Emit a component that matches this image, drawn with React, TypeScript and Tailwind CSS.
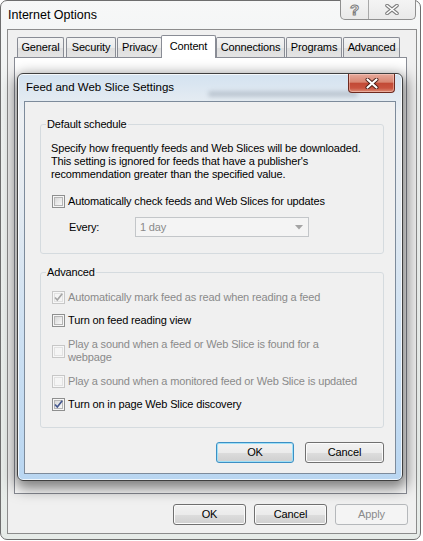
import React from "react";

function Check({ checked = false, disabled = false }: { checked?: boolean; disabled?: boolean }) {
  return (
    <span
      className={`flex h-[13px] w-[13px] shrink-0 items-center justify-center border ${
        disabled ? "border-[#c7c7c7] bg-[#f7f7f7]" : "border-[#8e8f8f] bg-[#f6f6f6]"
      }`}
    >
      <span
        className={`relative h-[9px] w-[9px] border ${
          disabled
            ? "border-[#e2e2e2] bg-[#f5f5f5]"
            : "border-[#b5b5b5] bg-gradient-to-br from-[#d8d8d8] to-[#f9f9f9]"
        }`}
      >
        {checked && (
          <svg className="absolute left-[-2px] top-[-2px]" width="11" height="11" viewBox="0 0 11 11">
            <path
              d="M2 5.5 L4.3 8 L9.2 1.8"
              fill="none"
              stroke={disabled ? "#a6a6a6" : "#46598f"}
              strokeWidth="1.7"
            />
          </svg>
        )}
      </span>
    </span>
  );
}

function Row({
  checked,
  disabled,
  className = "",
  children,
}: {
  checked?: boolean;
  disabled?: boolean;
  className?: string;
  children: React.ReactNode;
}) {
  return (
    <div
      className={`flex items-center gap-[3px] pl-[11px] leading-[13px] ${
        disabled ? "text-[#8a8a8a]" : "text-black"
      } ${className}`}
    >
      <Check checked={checked} disabled={disabled} />
      <span>{children}</span>
    </div>
  );
}

function Btn({
  label,
  w,
  primary,
  disabled,
}: {
  label: string;
  w: string;
  primary?: boolean;
  disabled?: boolean;
}) {
  const look = disabled
    ? "border-[#b5b8bb] bg-[#f4f4f4] text-[#8a8a8a]"
    : primary
    ? "border-[#3c8fc4] bg-[linear-gradient(180deg,#f2f2f2_0%,#ebebeb_50%,#dcdcdc_51%,#cfcfcf_100%)] shadow-[inset_0_0_0_1px_#9fe0f7] text-black"
    : "border-[#707070] bg-[linear-gradient(180deg,#f2f2f2_0%,#ebebeb_50%,#dddddd_51%,#cfcfcf_100%)] shadow-[inset_0_0_0_1px_#fbfbfb] text-black";
  return (
    <div className={`flex h-[21px] ${w} items-center justify-center rounded-[3px] border ${look}`}>
      {label}
    </div>
  );
}

const tabs = [
  { label: "General", cls: "w-[47px]" },
  { label: "Security", cls: "ml-[2px] w-[50px]" },
  { label: "Privacy", cls: "ml-[1px] w-[45px]" },
  { label: "Content", cls: "ml-[-1px] w-[55px]", active: true },
  { label: "Connections", cls: "w-[69px]" },
  { label: "Programs", cls: "ml-[1px] w-[56px]" },
  { label: "Advanced", cls: "ml-[1px] w-[57px]" },
];

export default function App() {
  return (
    <div className="h-[541px] w-[423px] bg-white font-['Liberation_Sans',Arial,sans-serif] text-[11px] tracking-[-0.15px] text-black">
      <div className="relative flex h-[540px] w-[421px] flex-col rounded-[7px] border border-[#6e6e6e] bg-[linear-gradient(180deg,#f7f8f8_0%,#eef1f0_20%,#e6ebe8_100%)] pb-[5px] pl-[6px] pr-[3px]">
        <div className="flex h-[28px] items-center pl-[1px] text-[12.5px] tracking-normal">Internet Options</div>

        {/* caption buttons */}
        <div className="absolute right-[4px] top-[-1px] flex h-[20px] w-[76px] overflow-hidden rounded-b-[5px] border border-t-0 border-[#8f8f8f] bg-[linear-gradient(180deg,#f4f4f4,#e9e9e9)]">
          <div className="flex w-[28px] items-center justify-center border-r border-[#a8a8a8]">
            <span className="text-[15px] font-bold leading-none text-white [-webkit-text-stroke:1px_#7c7c7c]">?</span>
          </div>
          <div className="flex flex-1 items-center justify-center">
            <svg width="14" height="11" viewBox="0 0 14 11">
              <path d="M2 1.5 L12 9.5 M12 1.5 L2 9.5" stroke="#7f7f7f" strokeWidth="3.6" strokeLinecap="round" />
              <path d="M2 1.5 L12 9.5 M12 1.5 L2 9.5" stroke="#ffffff" strokeWidth="1.6" strokeLinecap="round" />
            </svg>
          </div>
        </div>

        {/* client */}
        <div className="flex flex-1 flex-col border border-[#8c8c8c] bg-[#f0f0f0]">
          <div className="flex items-end pl-[9px] pt-[5px]">
            {tabs.map((t) =>
              t.active ? (
                <div
                  key={t.label}
                  className={`relative z-10 -mb-px flex h-[23px] items-center justify-center rounded-t-[2px] border border-b-0 border-[#898c95] bg-white pb-[1px] ${t.cls}`}
                >
                  {t.label}
                </div>
              ) : (
                <div
                  key={t.label}
                  className={`flex h-[20px] items-center justify-center rounded-t-[2px] border border-b-0 border-[#898c95] bg-[linear-gradient(180deg,#f4f4f4_0%,#ebebeb_50%,#dedede_51%,#e4e4e4_100%)] ${t.cls}`}
                >
                  {t.label}
                </div>
              )
            )}
          </div>

          <div className="relative ml-[6px] h-[437px] w-[393px] border border-[#898c95] bg-white">
            {/* Feed and Web Slice Settings dialog */}
            <div className="absolute left-[2px] top-[15px] z-20 flex h-[408px] w-[386px] flex-col overflow-hidden rounded-[6px] border border-[#3f3f3f] bg-[linear-gradient(180deg,#d3e2f0_0%,#edf0f3_10%,#e5ebf1_30%,#cde0f2_65%,#b9d6f1_100%)] px-[6px] pb-[6px] shadow-[1px_5px_14px_3px_rgba(0,0,0,0.5),inset_0_0_0_1px_rgba(255,255,255,0.75)]">
              {/* content behind the glass, blurred */}
              <div aria-hidden className="pointer-events-none absolute left-[190px] top-[17px] h-[6px] w-[150px] rounded-full bg-[#8894a3] opacity-40 blur-[2px]" />
              <div className="relative flex h-[27px] items-center pl-[2px] text-[11.5px] tracking-normal">
                Feed and Web Slice Settings
              </div>
              <div className="absolute right-[7px] top-0 flex h-[19px] w-[47px] items-center justify-center rounded-b-[4px] border border-t-0 border-[#6e2a20] bg-[linear-gradient(180deg,#e6aa9c_0%,#d98672_45%,#c24a36_52%,#c9533f_78%,#dc8f79_100%)] shadow-[inset_0_0_0_1px_rgba(255,220,210,0.45)]">
                <svg width="14" height="11" viewBox="0 0 14 11">
                  <path d="M2.5 1.5 L11.5 9.5 M11.5 1.5 L2.5 9.5" stroke="#4a2019" strokeWidth="4" strokeLinecap="round" />
                  <path d="M2.5 1.5 L11.5 9.5 M11.5 1.5 L2.5 9.5" stroke="#ffffff" strokeWidth="2.2" strokeLinecap="round" />
                </svg>
              </div>

              <div className="relative flex flex-1 flex-col border border-[#7d8b9b] bg-[#f0f0f0] pl-[15px] pr-[11px] pt-[15px]">
                <fieldset className="rounded-[3px] border border-[#d5dbdf] pb-[16px]">
                  <legend className="ml-[5px] px-[1px] leading-[14px]">Default schedule</legend>
                  <p className="mt-[11px] pl-[10px] leading-[13px]">
                    Specify how frequently feeds and Web Slices will be downloaded.
                    <br />
                    This setting is ignored for feeds that have a publisher's
                    <br />
                    recommendation greater than the specified value.
                  </p>
                  <Row className="mt-[14px]">Automatically check feeds and Web Slices for updates</Row>
                  <div className="mt-[9px] flex items-center pl-[28px]">
                    <span className="w-[66px]">Every:</span>
                    <div className="flex h-[20px] w-[174px] items-center justify-between border border-[#c3c6c9] bg-[#f4f4f4] pl-[4px] pr-[5px] text-[#8a8a8a]">
                      <span>1 day</span>
                      <svg width="8" height="5" viewBox="0 0 8 5">
                        <path d="M0 0 H8 L4 4.5 Z" fill="#a4a4a4" />
                      </svg>
                    </div>
                  </div>
                </fieldset>

                <fieldset className="mt-[11px] rounded-[3px] border border-[#d5dbdf] pb-[16px]">
                  <legend className="ml-[5px] px-[1px] leading-[14px]">Advanced</legend>
                  <div className="mt-[12px] flex flex-col gap-[10px]">
                    <Row checked disabled>
                      Automatically mark feed as read when reading a feed
                    </Row>
                    <Row>Turn on feed reading view</Row>
                    <Row disabled className="mt-[1px]">
                      Play a sound when a feed or Web Slice is found for a
                      <br />
                      webpage
                    </Row>
                    <Row disabled className="mt-[1px]">
                      Play a sound when a monitored feed or Web Slice is updated
                    </Row>
                    <Row checked>Turn on in page Web Slice discovery</Row>
                  </div>
                </fieldset>

                <div className="mt-[14px] flex justify-end gap-[11px]">
                  <Btn label="OK" w="w-[78px]" primary />
                  <Btn label="Cancel" w="w-[79px]" />
                </div>
              </div>
            </div>
          </div>

          <div className="mt-[10px] flex justify-end gap-[8px] pr-[8px]">
            <Btn label="OK" w="w-[73px]" />
            <Btn label="Cancel" w="w-[73px]" />
            <Btn label="Apply" w="w-[73px]" disabled />
          </div>
        </div>
      </div>
    </div>
  );
}
